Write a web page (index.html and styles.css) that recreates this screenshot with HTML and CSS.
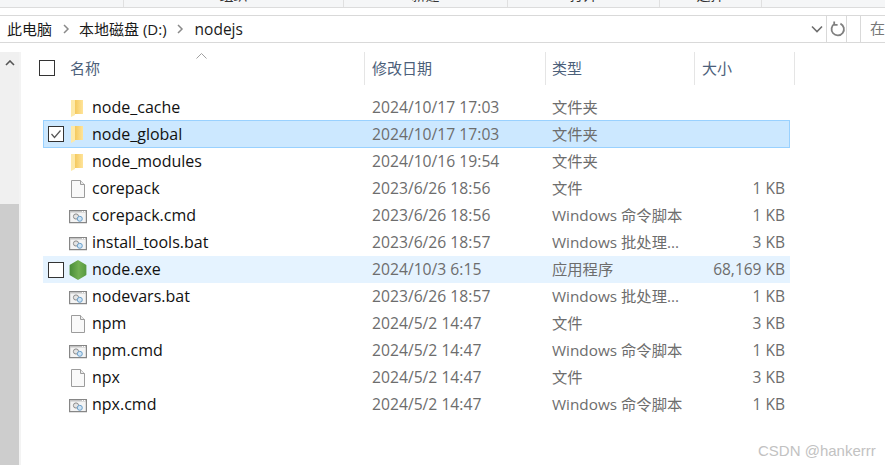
FILE: index.html
```html
<!DOCTYPE html>
<html lang="zh-CN">
<head>
  <meta charset="UTF-8">
  <meta name="viewport" content="width=device-width, initial-scale=1.0">
  <title>nodejs</title>
  <link rel="stylesheet" href="styles.css">
</head>
<body>
  <!-- icon sprite -->
  <svg class="sprite" aria-hidden="true">
    <defs>
      <linearGradient id="folder-fill" x1="0" x2="1" y1="0" y2="0">
        <stop offset="0" stop-color="#f4c95f"/>
        <stop offset="1" stop-color="#ffe49a"/>
      </linearGradient>
      <linearGradient id="node-fill" x1="0" x2="1" y1="0" y2="0">
        <stop offset="0" stop-color="#4c8f3a"/>
        <stop offset=".55" stop-color="#72b052"/>
        <stop offset="1" stop-color="#5a9c42"/>
      </linearGradient>
    </defs>
    <symbol id="i-folder" viewBox="0 0 18 20">
      <path d="M6 2h8v14H6z" fill="url(#folder-fill)"/>
      <path d="M2 2h4v15l-4 2z" fill="#fde9a9"/>
    </symbol>
    <symbol id="i-doc" viewBox="0 0 18 20">
      <path d="M2.500 1.500h9l4 4v13h-13z" fill="#f9f9f9" stroke="#9c9c9c"/>
      <path d="M11.500 1.500v4h4" fill="#ececec" stroke="#9c9c9c"/>
    </symbol>
    <symbol id="i-cmd" viewBox="0 0 18 20">
      <path d="M.6 4.600h16.800v12H.6z" fill="#f4f4f4" stroke="#868686" stroke-width="1.200"/>
      <path d="M1 5h16v1.500H1z" fill="#c4c4c4"/>
      <path d="M13 5.500h1M15 5.500h1" stroke="#fff"/>
      <circle cx="7" cy="10.500" r="2.600" fill="#e4e4e4" stroke="#8c8c8c"/>
      <circle cx="10.800" cy="12.800" r="2.500" fill="#cfe4f5" stroke="#6b9fc9"/>
    </symbol>
    <symbol id="i-node" viewBox="0 0 18 20">
      <path d="M9 1l7.600 4.400v9.200L9 19l-7.600-4.400V5.400z" fill="url(#node-fill)" stroke="url(#node-fill)" stroke-width="1.600" stroke-linejoin="round"/>
    </symbol>
  </svg>

  <div class="ribbon">
    <div class="group g1"></div>
    <div class="group g2"><span>组织</span></div>
    <div class="group g3"><span>新建</span></div>
    <div class="group g4"><span>打开</span></div>
    <div class="group g5"><span>选择</span></div>
  </div>

  <div class="address">
    <div class="crumbs">
      <span>此电脑</span>
      <svg class="sep" viewBox="0 0 8 12"><path d="M2 2l4 4-4 4" fill="none" stroke="#8a8a8a" stroke-width="1.500"/></svg>
      <span>本地磁盘 (D:)</span>
      <svg class="sep" viewBox="0 0 8 12"><path d="M2 2l4 4-4 4" fill="none" stroke="#8a8a8a" stroke-width="1.500"/></svg>
      <span class="current">nodejs</span>
      <svg class="drop" viewBox="0 0 12 8"><path d="M1 1.500l5 5 5-5" fill="none" stroke="#6e6e6e" stroke-width="1.600"/></svg>
    </div>
    <div class="refresh">
      <svg viewBox="0 0 16 16"><path d="M10.400 2.600A6.200 6.200 0 1 1 4.700 2.800M4.200 .4v3.400h3.400" fill="none" stroke="#808080" stroke-width="1.800"/></svg>
    </div>
    <div class="search">在</div>
  </div>

  <div class="main">
    <div class="scrollbar">
      <div class="track">
        <svg class="up" viewBox="0 0 10 6"><path d="M1 5l4-4 4 4" fill="none" stroke="#555" stroke-width="1.600"/></svg>
      </div>
      <div class="thumb"></div>
    </div>

    <div class="pane">
      <div class="head">
        <div class="hcell c-name">
          <span class="box"></span>
          <span class="hname">名称</span>
          <svg class="sort" viewBox="0 0 11 6"><path d="M.5 5.500l5-5 5 5" fill="none" stroke="#a0a0a0"/></svg>
        </div>
        <div class="hcell c-date">修改日期</div>
        <div class="hcell c-type">类型</div>
        <div class="hcell c-size">大小</div>
      </div>

      <div class="list">
        <div class="row"><div class="c-name"><span class="box off"></span><svg class="ico"><use href="#i-folder"/></svg><span>node_cache</span></div><div class="c-date">2024/10/17 17:03</div><div class="c-type">文件夹</div><div class="c-size"></div></div>
        <div class="row selected"><div class="c-name"><span class="box checked"><svg viewBox="0 0 14 14"><path d="M2.500 7l3 3.500 6-7" fill="none" stroke="#555" stroke-width="1.200"/></svg></span><svg class="ico"><use href="#i-folder"/></svg><span>node_global</span></div><div class="c-date">2024/10/17 17:03</div><div class="c-type">文件夹</div><div class="c-size"></div></div>
        <div class="row"><div class="c-name"><span class="box off"></span><svg class="ico"><use href="#i-folder"/></svg><span>node_modules</span></div><div class="c-date">2024/10/16 19:54</div><div class="c-type">文件夹</div><div class="c-size"></div></div>
        <div class="row"><div class="c-name"><span class="box off"></span><svg class="ico"><use href="#i-doc"/></svg><span>corepack</span></div><div class="c-date">2023/6/26 18:56</div><div class="c-type">文件</div><div class="c-size">1 KB</div></div>
        <div class="row"><div class="c-name"><span class="box off"></span><svg class="ico"><use href="#i-cmd"/></svg><span>corepack.cmd</span></div><div class="c-date">2023/6/26 18:56</div><div class="c-type">Windows 命令脚本</div><div class="c-size">1 KB</div></div>
        <div class="row"><div class="c-name"><span class="box off"></span><svg class="ico"><use href="#i-cmd"/></svg><span>install_tools.bat</span></div><div class="c-date">2023/6/26 18:57</div><div class="c-type">Windows 批处理...</div><div class="c-size">3 KB</div></div>
        <div class="row hover"><div class="c-name"><span class="box"></span><svg class="ico"><use href="#i-node"/></svg><span>node.exe</span></div><div class="c-date">2024/10/3 6:15</div><div class="c-type">应用程序</div><div class="c-size">68,169 KB</div></div>
        <div class="row"><div class="c-name"><span class="box off"></span><svg class="ico"><use href="#i-cmd"/></svg><span>nodevars.bat</span></div><div class="c-date">2023/6/26 18:57</div><div class="c-type">Windows 批处理...</div><div class="c-size">1 KB</div></div>
        <div class="row"><div class="c-name"><span class="box off"></span><svg class="ico"><use href="#i-doc"/></svg><span>npm</span></div><div class="c-date">2024/5/2 14:47</div><div class="c-type">文件</div><div class="c-size">3 KB</div></div>
        <div class="row"><div class="c-name"><span class="box off"></span><svg class="ico"><use href="#i-cmd"/></svg><span>npm.cmd</span></div><div class="c-date">2024/5/2 14:47</div><div class="c-type">Windows 命令脚本</div><div class="c-size">1 KB</div></div>
        <div class="row"><div class="c-name"><span class="box off"></span><svg class="ico"><use href="#i-doc"/></svg><span>npx</span></div><div class="c-date">2024/5/2 14:47</div><div class="c-type">文件</div><div class="c-size">3 KB</div></div>
        <div class="row"><div class="c-name"><span class="box off"></span><svg class="ico"><use href="#i-cmd"/></svg><span>npx.cmd</span></div><div class="c-date">2024/5/2 14:47</div><div class="c-type">Windows 命令脚本</div><div class="c-size">1 KB</div></div>
      </div>
    </div>
  </div>

  <div class="watermark">CSDN @hankerrr</div>
</body>
</html>
```

FILE: styles.css
```css
html, body {
  margin: 0;
  padding: 0;
  overflow: hidden;
}
body {
  position: relative;
  width: 885px;
  height: 465px;
  background: #fff;
  color: #111;
  font-family: "Open Sans", "Noto Sans CJK SC", sans-serif;
  font-size: 15px;
}
.sprite {
  width: 0;
  height: 0;
  position: absolute;
}

/* ribbon, only the bottom edge is in the picture */
.ribbon {
  display: flex;
  height: 7px;
  background: #f5f6f7;
  border-bottom: 1px solid #dcdcdc;
  overflow: hidden;
}
.group {
  height: 7px;
  box-sizing: border-box;
  border-right: 1px solid #e0e0e0;
  text-align: center;
  font-size: 14px;
  line-height: 1px;
  color: #333;
}
.group span {
  display: block;
  margin-top: -6px;
}
.group.g1 { width: 124px; }
.group.g2 { width: 220px; }
.group.g3 { width: 164px; }
.group.g4 { width: 152px; }
.group.g5 { width: 102px; }

/* address bar */
.address {
  display: flex;
  height: 26px;
  margin-top: 7px;
  border-top: 1px solid #d9d9d9;
  border-bottom: 1px solid #d9d9d9;
}
.crumbs {
  flex: 1;
  display: flex;
  align-items: center;
  padding-left: 7px;
  font-size: 15px;
  line-height: 24px;
  color: #1a1a1a;
}
.current {
  margin-left: 1px;
  font-size: 15.500px;
}
.sep {
  width: 8px;
  height: 12px;
  margin: 0 9.5px;
}
.drop {
  width: 12px;
  height: 8px;
  margin-left: auto;
  margin-right: 3px;
}
.refresh {
  width: 17px;
  border-left: 1px solid #d9d9d9;
  border-right: 1px solid #d9d9d9;
  display: flex;
  align-items: center;
  justify-content: center;
  padding-left: 2px;
}
.refresh svg {
  width: 16px;
  height: 16px;
  flex: none;
}
.search {
  width: 15px;
  margin: -1px 0 -1px 13px;
  border: 1px solid #d9d9d9;
  border-right: none;
  padding-left: 9px;
  line-height: 24px;
  color: #777;
  white-space: nowrap;
}

/* body of the window */
.main {
  display: flex;
  height: 413px;
  padding-top: 9px;
}
.scrollbar {
  width: 19px;
  margin-right: 1px;
  border-right: 2px solid #f3f3f3;
  display: flex;
  flex-direction: column;
  background: #f0f0f0;
}
.track {
  height: 152px;
  display: flex;
  justify-content: center;
  padding-top: 8px;
  box-sizing: border-box;
}
.up {
  width: 10px;
  height: 6px;
}
.thumb {
  flex: 1;
  background: #cdcdcd;
}
.pane {
  flex: 1;
  padding-left: 21px;
}

/* columns are shared by the header and the rows */
.c-name { width: 322px; }
.c-date { width: 173px; padding-left: 7px; color: #6d6d6d; font-size: 15.7px; }
.c-type { width: 142px; padding-left: 7px; color: #6d6d6d; font-size: 15.3px; }
.c-size { width: 91px; text-align: right; color: #6d6d6d; font-size: 15.5px; }

.head {
  display: flex;
  height: 33px;
  margin-bottom: 9px;
}
.hcell {
  position: relative;
  height: 33px;
  line-height: 33px;
  font-size: 15px;
  color: #4c607a;
  border-right: 1px solid #e5e5e5;
  margin-right: -1px;
}
.hcell.c-size {
  width: 92px;
  padding-left: 8px;
  text-align: left;
}
.hcell.c-name {
  display: flex;
  align-items: center;
  box-sizing: border-box;
  padding-bottom: 2px;
  margin-right: 0;
  line-height: 31px;
}
.hname {
  margin-left: 10px;
  margin-top: 2px;
}
.hcell .box {
  margin-left: -4px;
}
.sort {
  position: absolute;
  left: 153px;
  top: 1px;
  width: 11px;
  height: 6px;
}

.box {
  display: block;
  flex: none;
  width: 14px;
  height: 14px;
  border: 1px solid #333;
  background: #fff;
  margin-right: 5px;
}
.box.off {
  visibility: hidden;
}
.box svg {
  display: block;
  width: 14px;
  height: 14px;
}

.list {
  width: 747px;
}
.row {
  display: flex;
  align-items: center;
  height: 27px;
  line-height: 27px;
}
.row .c-name {
  display: flex;
  align-items: center;
  padding-left: 5px;
  box-sizing: border-box;
  font-size: 16px;
  color: #111;
}
.ico {
  width: 18px;
  height: 20px;
  margin-right: 5px;
  flex: none;
}
.row.selected {
  height: 28px;
  margin-top: -1px;
  background: #cce8ff;
  outline: 1px solid #99d1ff;
  outline-offset: -1px;
}
.row.hover {
  background: #e5f3ff;
}

.watermark {
  position: absolute;
  left: 758px;
  top: 442px;
  font-family: "Liberation Sans", sans-serif;
  font-size: 15px;
  white-space: nowrap;
  color: #c2c2c2;
}
```
